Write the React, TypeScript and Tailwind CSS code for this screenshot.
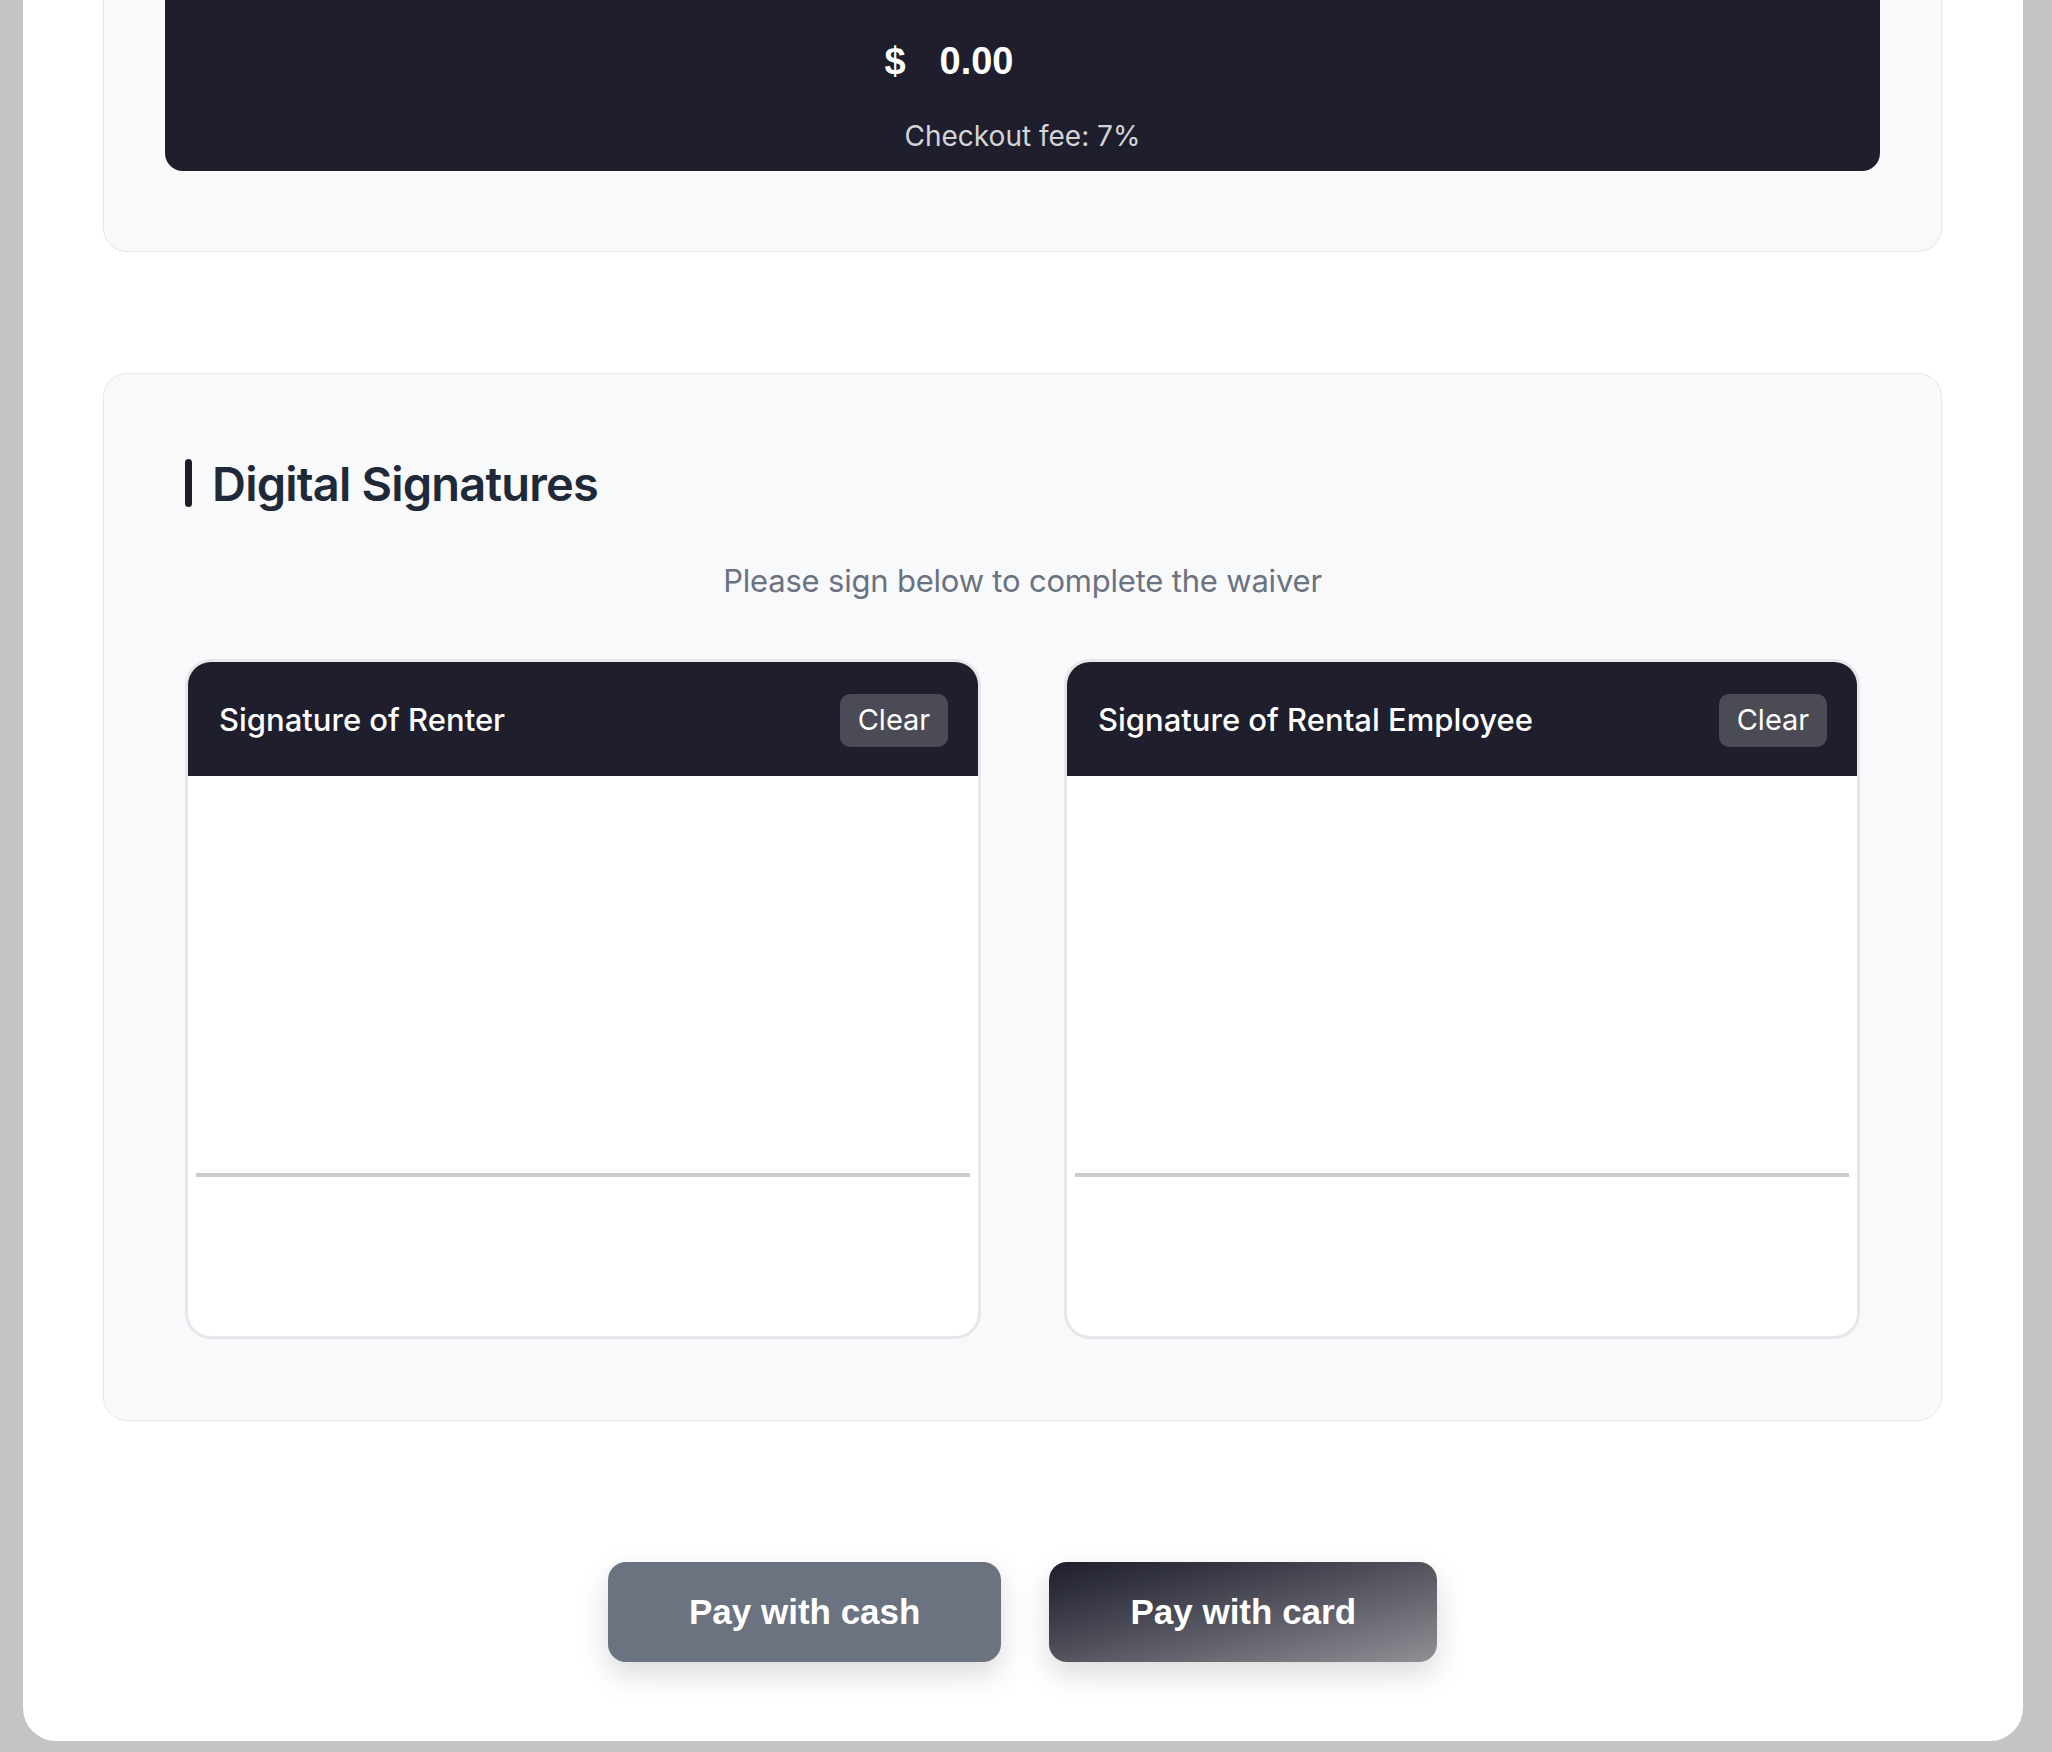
const sans = "font-['Inter','Noto_Sans',sans-serif]";
const arial = "font-['Liberation_Sans','Arial',sans-serif]";

function SignaturePad({ title }: { title: string }) {
  return (
    <div className="h-[680px] rounded-[26px] border-[3px] border-[#e5e7eb] bg-white overflow-hidden">
      <div className="h-[114px] bg-[#1e1e2c] flex items-center justify-between pl-[31px] pr-[30px] pt-[2px]">
        <span className={`${sans} text-[31px] font-medium text-white`}>{title}</span>
        <button className={`${sans} h-[53px] w-[108px] rounded-[10px] bg-[#4b4b56] text-[29px] text-white`}>
          Clear
        </button>
      </div>
      <div className="pt-[397px] px-[8px]">
        <div className="h-[4px] bg-[#cccccc]" />
      </div>
    </div>
  );
}

export default function App() {
  return (
    <div className="min-h-screen bg-[#c4c4c6] pl-[23px] pr-[29px] pb-[11px]">
      <div className="bg-white rounded-b-[33px] pl-[80px] pr-[81px] pb-[79px]">
        {/* checkout summary (scrolled, top cut off) */}
        <div className="border border-t-0 border-[#e3e7ee] bg-[#f8f9fb] rounded-b-[24px] px-[61px] pb-[80px]">
          <div className="h-[171px] bg-[#1e1e2c] rounded-b-[18px] flex flex-col items-center pt-[39px]">
            <div className={`${arial} h-[44px] flex items-center font-bold text-white text-[38px] leading-none`}>
              <span className="w-[23px]">$</span>
              <span className="w-[253px] pl-[32px]">0.00</span>
            </div>
            <div className={`${sans} mt-[33px] text-[28px] leading-[40px] text-[#d4d4d8]`}>Checkout fee: 7%</div>
          </div>
        </div>

        {/* signatures */}
        <div className="mt-[121px] border border-[#e3e7ee] bg-[#f8f9fb] rounded-[24px] p-[81px]">
          <div className="h-[56px] flex items-center gap-[20px]">
            <div className="w-[7px] h-[48px] rounded-full bg-[#1e1e2c]" />
            <h2 className={`${sans} text-[47px] font-semibold text-[#1f2937] tracking-[-0.8px] pt-[2px]`}>
              Digital Signatures
            </h2>
          </div>
          <p className={`${sans} mt-[47px] text-center text-[31px] leading-[45px] text-[#6b7280] tracking-[-0.2px]`}>
            Please sign below to complete the waiver
          </p>
          <div className="mt-[56px] grid grid-cols-2 gap-[83px]">
            <SignaturePad title="Signature of Renter" />
            <SignaturePad title="Signature of Rental Employee" />
          </div>
        </div>

        <div className="mt-[141px] flex justify-center gap-[48px]">
          <button
            className={`${arial} h-[100px] px-[81px] rounded-[18px] bg-[#6b7280] text-white text-[35px] font-bold shadow-[0_12px_30px_rgba(0,0,0,0.15)]`}
          >
            Pay with cash
          </button>
          <button
            className={`${arial} h-[100px] px-[81px] rounded-[18px] bg-linear-to-br from-[#1e1e2c] to-[#909096] text-white text-[35px] font-bold shadow-[0_12px_30px_rgba(0,0,0,0.15)]`}
          >
            Pay with card
          </button>
        </div>
      </div>
    </div>
  );
}
